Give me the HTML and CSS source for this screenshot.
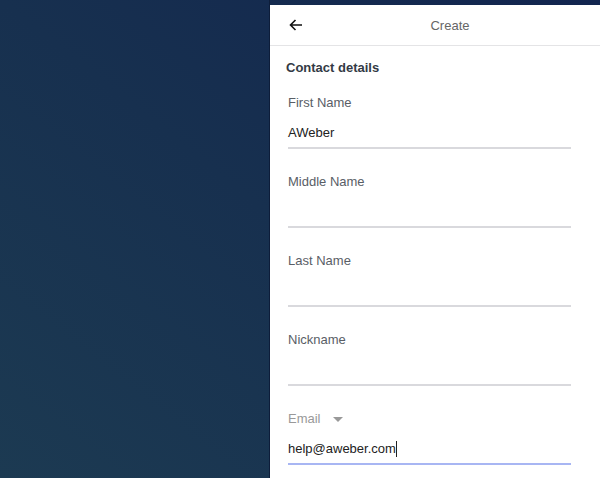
FILE: index.html
```html
<!DOCTYPE html>
<html>
<head>
<meta charset="utf-8">
<link rel="stylesheet" href="styles.css">
</head>
<body>
<div class="page">
  <div class="backdrop"></div>
  <div class="panel">
    <div class="header">
      <svg class="back" width="14" height="12" viewBox="0 0 14 12"><path d="M13 6H1.5M6.5 1L1.5 6l5 5" fill="none" stroke="#111" stroke-width="1.6"/></svg>
      <div class="title">Create</div>
    </div>
    <div class="content">
      <div class="section">Contact details</div>
      <div class="field">
        <div class="label">First Name</div>
        <div class="value">AWeber</div>
      </div>
      <div class="field">
        <div class="label">Middle Name</div>
        <div class="value"></div>
      </div>
      <div class="field">
        <div class="label">Last Name</div>
        <div class="value"></div>
      </div>
      <div class="field">
        <div class="label">Nickname</div>
        <div class="value"></div>
      </div>
      <div class="field active">
        <div class="label muted">Email <span class="caret"></span></div>
        <div class="value">help@aweber.com<span class="cursor"></span></div>
      </div>
    </div>
  </div>
</div>
</body>
</html>
```
FILE: styles.css
```css
html, body { margin: 0; padding: 0; }
body { font-family: "Liberation Sans", Arial, sans-serif; }
.page {
  width: 600px; height: 478px; overflow: hidden;
  display: flex;
  background: linear-gradient(to top right, #1c3a52 0%, #17304f 50%, #12254f 100%);
}
.backdrop { width: 270px; flex: none; box-shadow: inset -1px 0 0 #0d1d3a; }
.panel {
  margin-top: 5px; width: 330px; background: #fff; flex: none;
}
.header {
  height: 40px; border-bottom: 1px solid #e4e4e6;
  display: flex; align-items: center; position: relative;
}
.back { margin-left: 19px; flex: none; }
.title {
  position: absolute; left: 30px; right: 0; text-align: center;
  font-size: 13px; color: #666; pointer-events: none;
}
.content { padding: 14px 0 0 18px; }
.section {
  font-size: 13px; font-weight: bold; color: #333a45; line-height: 16px;
  margin-left: -2px; margin-bottom: 19px;
}
.field { width: 283px; margin-bottom: 25px; }
.label { font-size: 13px; line-height: 16px; color: #595e66; margin-bottom: 14px; display: flex; align-items: center; }
.label.muted { color: #999; }
.caret {
  width: 0; height: 0; margin-left: 12px; margin-top: 1px;
  border-left: 5px solid transparent; border-right: 5px solid transparent; border-top: 5px solid #999;
}
.value {
  font-size: 13px; line-height: 16px; height: 16px; color: #222;
  padding-bottom: 6px; border-bottom: 2px solid #d9d9dd;
  display: flex; align-items: center;
}
.active .value { border-bottom-color: #a8b6f3; }
.cursor { width: 1px; height: 16px; background: #222; display: inline-block; }
```
